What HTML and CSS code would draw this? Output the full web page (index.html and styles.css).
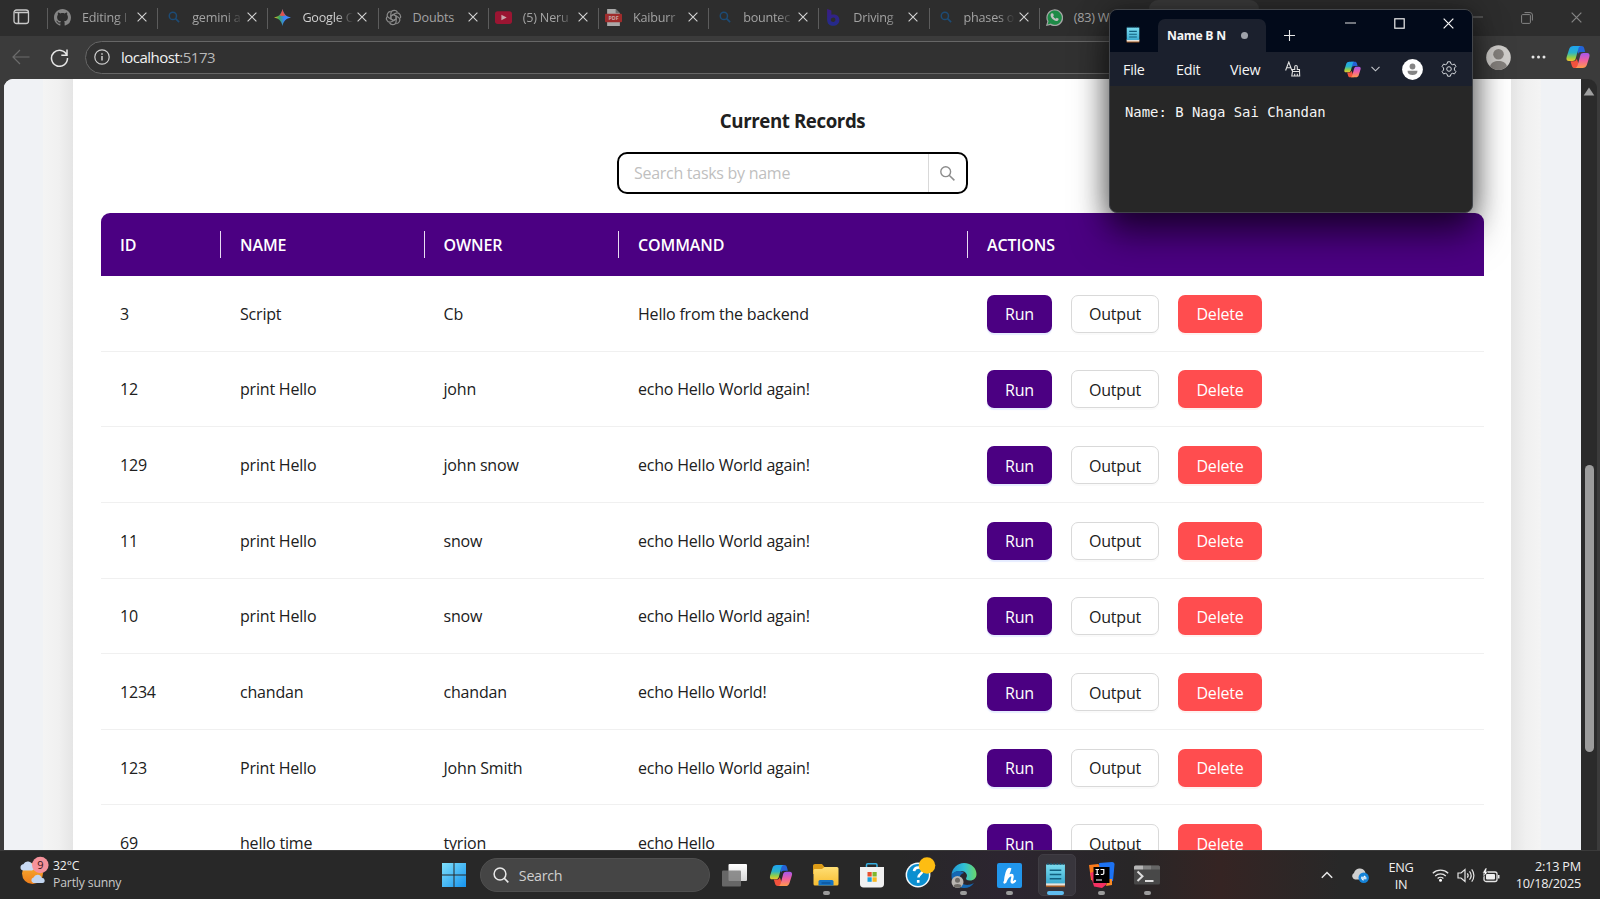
FILE: index.html
```html
<!DOCTYPE html>
<html lang="en">
<head>
<meta charset="utf-8">
<title>Current Records</title>
<link rel="stylesheet" href="styles.css">
</head>
<body>
<svg class="defs" width="0" height="0" aria-hidden="true">
  <defs>
    <linearGradient id="cpA" x1="0" y1="0" x2="0" y2="1"><stop offset="0" stop-color="#1fa2f0"/><stop offset=".45" stop-color="#2bb4c8"/><stop offset=".75" stop-color="#8fcf4a"/><stop offset="1" stop-color="#f2c52e"/></linearGradient>
    <linearGradient id="cpB" x1="0" y1="0" x2="0" y2="1"><stop offset="0" stop-color="#a457f0"/><stop offset=".5" stop-color="#f0609e"/><stop offset="1" stop-color="#ff9a4a"/></linearGradient>
    <linearGradient id="gem" x1="0" y1="0" x2="1" y2="0"><stop offset="0" stop-color="#f5c518"/><stop offset=".3" stop-color="#39a85a"/><stop offset=".6" stop-color="#3b82f6"/><stop offset="1" stop-color="#4c8df8"/></linearGradient>
    <linearGradient id="win" x1="0" y1="0" x2="1" y2="1"><stop offset="0" stop-color="#7fe0fb"/><stop offset="1" stop-color="#1593ee"/></linearGradient>
    <linearGradient id="fold" x1="0" y1="0" x2="0" y2="1"><stop offset="0" stop-color="#ffdf75"/><stop offset="1" stop-color="#f7bd31"/></linearGradient>
    <linearGradient id="edg" x1="0" y1="0" x2="1" y2="0"><stop offset="0" stop-color="#2295d6"/><stop offset=".5" stop-color="#2fc0d6"/><stop offset="1" stop-color="#6bd76a"/></linearGradient>
    <linearGradient id="pad" x1="0" y1="0" x2="0" y2="1"><stop offset="0" stop-color="#7adcf0"/><stop offset="1" stop-color="#3cabd0"/></linearGradient>
    <linearGradient id="sun" x1="0" y1="0" x2="0" y2="1"><stop offset="0" stop-color="#f9b233"/><stop offset="1" stop-color="#ee7d1a"/></linearGradient>
    <linearGradient id="bb" x1="0" y1="0" x2="0" y2="1"><stop offset="0" stop-color="#3c1c84"/><stop offset="1" stop-color="#222c8c"/></linearGradient>
    <linearGradient id="tv" x1="0" y1="0" x2="0" y2="1"><stop offset="0" stop-color="#ffffff"/><stop offset="1" stop-color="#d6d6d6"/></linearGradient>
    <symbol id="copilot" viewBox="0 0 24 24">
      <path fill="#2463d6" d="M10 1h5.500c1.500 0 2.300.9 2.700 2.300l1 3.700h-4.500c-1.400 0-2.200.8-2.600 2z"/>
      <path fill="url(#cpA)" d="M7.500 1h7.200c-1.400.4-2 1.400-2.400 2.900L9.700 13.500C9.200 15.300 8.200 16 6.500 16H3C.8 16 0 14.500.6 12.200L3.200 4C3.900 2 5.300 1 7.500 1z"/>
      <path fill="#f2523d" d="M14 23H8.800c-1.600 0-2.500-.8-3-2.300L4.500 16.300H7c2 0 3.200-.8 3.800-2.600z"/>
      <path fill="url(#cpB)" d="M16.500 23H9.300c1.400-.4 2-1.400 2.400-2.900l2.600-9.600c.5-1.800 1.500-2.500 3.200-2.500H21c2.200 0 3 1.500 2.400 3.800L20.800 20c-.7 2-2.100 3-4.300 3z"/>
    </symbol>
    <symbol id="x" viewBox="0 0 10 10"><path d="M.6.6l8.800 8.800M9.400.6L.6 9.400" fill="none" stroke="currentColor" stroke-width="1.100"/></symbol>
    <symbol id="mag" viewBox="0 0 16 16"><circle cx="6.500" cy="6.500" r="4.800" fill="none" stroke="#1d4b75" stroke-width="2"/><path d="M9.800 9.800l5 5" stroke="#1d4b75" stroke-width="2.300"/></symbol>
    <symbol id="notepad" viewBox="0 0 20 24">
      <path fill="#a45a23" d="M1 19h18v4.500H1z"/><path fill="#e9e4dc" d="M1 19h18v3H1z"/>
      <path fill="url(#pad)" d="M1 2h18v18H1z"/>
      <path stroke="#155a78" stroke-width="1.400" stroke-dasharray="1.500 1.500" d="M2 1.500h16" fill="none"/>
      <path stroke="#12607f" stroke-width="1.500" d="M4.500 7.500h11M4.500 11.500h11M4.500 15.500h11" fill="none"/>
    </symbol>
  </defs>
</svg>

<div class="screen">
  <header class="tabstrip">
    <div class="tab-actions"><svg width="17" height="16" viewBox="0 0 17 16"><rect x="1" y="1" width="14.500" height="13.500" rx="2.500" fill="none" stroke="#c9c9c9" stroke-width="1.300"/><path d="M1.500 3.500h13.500M5.500 3.500v11" stroke="#c9c9c9" stroke-width="1.500"/></svg></div>
    <div class="tab"><svg class="fav" viewBox="0 0 16 16"><path fill="#858585" d="M8 0C3.580 0 0 3.580 0 8c0 3.540 2.290 6.530 5.470 7.590.4.070.55-.17.55-.38 0-.19-.01-.82-.01-1.490-2.010.37-2.530-.49-2.690-.94-.09-.23-.48-.94-.82-1.130-.28-.15-.68-.52-.01-.53.63-.01 1.080.58 1.230.82.72 1.210 1.870.87 2.330.66.07-.52.28-.87.51-1.070-1.780-.2-3.640-.89-3.640-3.950 0-.87.31-1.590.82-2.150-.08-.2-.36-1.020.08-2.120 0 0 .67-.21 2.200.82.64-.18 1.320-.27 2-.27s1.360.09 2 .27c1.530-1.040 2.200-.82 2.200-.82.44 1.100.16 1.920.08 2.120.51.56.82 1.270.82 2.150 0 3.070-1.870 3.750-3.650 3.950.29.25.54.73.54 1.480 0 1.070-.01 1.930-.01 2.200 0 .21.15.46.55.38A8 8 0 0 0 16 8c0-4.420-3.580-8-8-8z"/></svg><span class="tab-title">Editing I</span><svg class="close"><use href="#x"/></svg></div>
    <div class="tab"><svg class="fav small"><use href="#mag"/></svg><span class="tab-title">gemini a</span><svg class="close"><use href="#x"/></svg></div>
    <div class="tab"><svg class="fav" viewBox="0 0 16 16"><path fill="url(#gem)" d="M8 0c.8 4.600 3.400 7.200 8 8-4.600.8-7.200 3.400-8 8-.8-4.600-3.400-7.200-8-8 4.600-.8 7.200-3.400 8-8z"/><path fill="#e0524a" d="M8 0c.5 2.800 1.500 4.700 3.100 6L8 6.500 4.900 6C6.500 4.700 7.500 2.800 8 0z"/></svg><span class="tab-title lit">Google C</span><svg class="close"><use href="#x"/></svg></div>
    <div class="tab"><svg class="fav" viewBox="0 0 16 16"><g fill="none" stroke="#8a8a8a" stroke-width="1.100"><path id="petal" d="M8 5.200l2.500 1.400v4.600c0 2-1.500 3.500-3.300 3.500-1.200 0-2.300-.6-2.900-1.600"/><use href="#petal" transform="rotate(60 8 8)"/><use href="#petal" transform="rotate(120 8 8)"/><use href="#petal" transform="rotate(180 8 8)"/><use href="#petal" transform="rotate(240 8 8)"/><use href="#petal" transform="rotate(300 8 8)"/></g></svg><span class="tab-title full">Doubts</span><svg class="close"><use href="#x"/></svg></div>
    <div class="tab"><svg class="fav" viewBox="0 0 16 16"><rect y="2" width="16" height="12" rx="2.500" fill="#9b1532"/><path d="M6 5.300l5 2.700-5 2.700z" fill="#c9a5ab"/></svg><span class="tab-title">(5) Neru</span><svg class="close"><use href="#x"/></svg></div>
    <div class="tab"><svg class="fav" viewBox="0 0 16 16"><path fill="#a9a9a9" d="M2 0h8l4 4v12H2z"/><path fill="#6b6b6b" d="M10 0v4h4z"/><rect y="4.500" width="16" height="8" rx="1" fill="#9f2c2c"/><text x="8" y="10.600" class="pdf" text-anchor="middle">PDF</text></svg><span class="tab-title">Kaiburr</span><svg class="close"><use href="#x"/></svg></div>
    <div class="tab"><svg class="fav small"><use href="#mag"/></svg><span class="tab-title">bountec</span><svg class="close"><use href="#x"/></svg></div>
    <div class="tab"><svg class="fav" viewBox="0 0 16 16"><path fill="url(#bb)" fill-rule="evenodd" d="M2 0l4 1.500v4C10 4 14 6.500 13.500 11c-.5 4-4.500 5.500-8 4.500C2.500 14.600 2 12 2 9zM8 8c-2 0-2.800 1.200-2.500 2.800.5 2 4 1.700 4.300-.3C10 9 9.300 8 8 8z"/></svg><span class="tab-title">Driving</span><svg class="close"><use href="#x"/></svg></div>
    <div class="tab"><svg class="fav small"><use href="#mag"/></svg><span class="tab-title">phases o</span><svg class="close"><use href="#x"/></svg></div>
    <div class="tab"><svg class="fav" viewBox="0 0 16 16"><path fill="#a5a5a5" d="M0 16l1.200-4.200A7.900 7.900 0 1 1 4.200 15z"/><path fill="#1e8a47" d="M1.500 14.500l.9-3A6.700 6.700 0 1 1 4.500 13.700z"/><path fill="#c0c0c0" d="M5.500 4l1.200.2.7 1.700-.7.900c.5 1 1.300 1.800 2.500 2.300l.9-.9 1.800.9c0 1.500-1 2.200-2.200 2.200C7 10.800 4.500 8.300 4.300 5.900 4.300 5 4.700 4.300 5.500 4z"/></svg><span class="tab-title full">(83) W</span></div>
    <div class="behind-tab"></div>
    <div class="win-controls">
      <svg width="10" height="10" viewBox="0 0 10 10"><path d="M0 5h10" stroke="#777"/></svg>
      <svg width="12" height="12" viewBox="0 0 12 12"><path d="M3.500.6H9a2.400 2.400 0 0 1 2.400 2.400v5.500" fill="none" stroke="#858585"/><rect x=".6" y="2.600" width="8.800" height="8.800" rx="1" fill="none" stroke="#858585"/></svg>
      <svg width="11" height="11"><use href="#x"/></svg>
    </div>
  </header>

  <nav class="toolbar">
    <svg class="back" width="18" height="16" viewBox="0 0 18 16"><path d="M8 1L1 8l7 7M1 8h16.500" fill="none" stroke="#6c6c6c" stroke-width="1.200"/></svg>
    <svg class="reload" width="19" height="19" viewBox="0 0 19 19"><path d="M16.900 7.200A8 8 0 1 0 17.500 10M17 1.500v5.700h-5.700" fill="none" stroke="#e6e6e6" stroke-width="1.500"/></svg>
    <div class="address">
      <svg width="16" height="16" viewBox="0 0 16 16"><circle cx="8" cy="8" r="7.200" fill="none" stroke="#cfcfcf" stroke-width="1.200"/><path d="M8 7v4.500M8 4.300v1.500" stroke="#cfcfcf" stroke-width="1.500"/></svg>
      <span><b class="host">localhost</b><span class="port">:5173</span></span>
    </div>
    <div class="tools">
      <svg width="25" height="25" viewBox="0 0 25 25"><circle cx="12.500" cy="12.500" r="12.300" fill="#cfcdca"/><circle cx="12.500" cy="9.300" r="5.300" fill="#85817d"/><path d="M4 21.500c1-4 4.300-5.500 8.500-5.500s7.500 1.500 8.500 5.500a12.300 12.300 0 0 1-17 0z" fill="#85817d"/></svg>
      <svg width="15" height="4" viewBox="0 0 15 4"><g fill="#e6e6e6"><circle cx="2" cy="2" r="1.500"/><circle cx="7.500" cy="2" r="1.500"/><circle cx="13" cy="2" r="1.500"/></g></svg>
      <svg width="24" height="24"><use href="#copilot"/></svg>
    </div>
  </nav>

  <div class="viewport">
    <div class="page">
      <div class="edge left"></div>
      <main class="card">
        <h1>Current Records</h1>
        <div class="search"><span class="placeholder">Search tasks by name</span><span class="search-btn"><svg width="15" height="15" viewBox="0 0 15 15"><circle cx="5.700" cy="5.700" r="4.900" fill="none" stroke="#8c8c8c" stroke-width="1.400"/><path d="M9.200 9.200l5.200 5.200" stroke="#8c8c8c" stroke-width="1.500"/></svg></span></div>
        <div class="table">
          <div class="row head"><span>ID</span><span>NAME</span><span>OWNER</span><span>COMMAND</span><span>ACTIONS</span></div>
          <div class="row"><span>3</span><span>Script</span><span>Cb</span><span>Hello from the backend</span><div class="actions"><button class="run">Run</button><button class="out">Output</button><button class="del">Delete</button></div></div>
          <div class="row"><span>12</span><span>print Hello</span><span>john</span><span>echo Hello World again!</span><div class="actions"><button class="run">Run</button><button class="out">Output</button><button class="del">Delete</button></div></div>
          <div class="row"><span>129</span><span>print Hello</span><span>john snow</span><span>echo Hello World again!</span><div class="actions"><button class="run">Run</button><button class="out">Output</button><button class="del">Delete</button></div></div>
          <div class="row"><span>11</span><span>print Hello</span><span>snow</span><span>echo Hello World again!</span><div class="actions"><button class="run">Run</button><button class="out">Output</button><button class="del">Delete</button></div></div>
          <div class="row"><span>10</span><span>print Hello</span><span>snow</span><span>echo Hello World again!</span><div class="actions"><button class="run">Run</button><button class="out">Output</button><button class="del">Delete</button></div></div>
          <div class="row"><span>1234</span><span>chandan</span><span>chandan</span><span>echo Hello World!</span><div class="actions"><button class="run">Run</button><button class="out">Output</button><button class="del">Delete</button></div></div>
          <div class="row"><span>123</span><span>Print Hello</span><span>John Smith</span><span>echo Hello World again!</span><div class="actions"><button class="run">Run</button><button class="out">Output</button><button class="del">Delete</button></div></div>
          <div class="row"><span>69</span><span>hello time</span><span>tyrion</span><span>echo Hello</span><div class="actions"><button class="run">Run</button><button class="out">Output</button><button class="del">Delete</button></div></div>
        </div>
      </main>
      <div class="edge right"></div>
    </div>
    <div class="scrollbar"><svg width="12" height="9" viewBox="0 0 12 9"><path d="M6 .5L11.300 8.500H.7z" fill="#a0a0a0"/></svg><div class="thumb"></div></div>
  </div>

  <footer class="taskbar">
    <div class="weather">
      <svg width="29" height="31" viewBox="0 0 29 31"><circle cx="12.500" cy="17.500" r="10.500" fill="url(#sun)"/><path fill="#c9daf3" d="M3 14.500a3.200 3.200 0 0 1 .3-6.300 5 5 0 0 1 9.300 1.300 2.600 2.600 0 0 1-.6 5z"/><path fill="#c2d5f0" d="M13.500 27a2.900 2.900 0 0 1 0-5.600 4.400 4.400 0 0 1 8.300.6 2.500 2.500 0 0 1 .7 5z"/><circle cx="20.300" cy="9" r="8.300" fill="#f5929b"/><text x="20.300" y="13" class="badge" text-anchor="middle">9</text></svg>
      <div class="wtext"><div class="temp">32°C</div><div class="cond">Partly sunny</div></div>
    </div>
    <div class="dock">
      <div class="app"><svg width="24" height="24" viewBox="0 0 24 24"><path fill="url(#win)" d="M0 0h11.500v11.500H0zM12.500 0H24v11.500H12.500zM0 12.500h11.500V24H0zM12.500 12.500H24V24H12.500z"/></svg></div>
      <div class="tsearch"><svg width="16" height="16" viewBox="0 0 16 16"><circle cx="7" cy="7" r="5.900" fill="none" stroke="#e8e8e8" stroke-width="1.500"/><path d="M11 11l4.300 4.300" stroke="#e8e8e8" stroke-width="1.700"/></svg>Search</div>
      <div class="app"><svg width="25" height="23" viewBox="0 0 25 23"><rect x="6.500" width="18.500" height="17" rx="1" fill="url(#tv)"/><rect y="6.500" width="19" height="16" rx="1" fill="#777" opacity=".8"/></svg></div>
      <div class="app"><svg width="24" height="23"><use href="#copilot"/></svg></div>
      <div class="app running"><svg width="26" height="24" viewBox="0 0 26 24"><path fill="#dc9b16" d="M0 3c0-1.200.8-2 2-2h7l2.500 3H24v7H0z"/><path fill="url(#fold)" d="M1.500 6H9l2.500-2H24a1.500 1.500 0 0 1 1.500 1.500V21A1.500 1.500 0 0 1 24 22.500H2A1.500 1.500 0 0 1 .5 21V7z"/><path fill="#1573c4" d="M5.500 22.500v-4a1.500 1.500 0 0 1 1.500-1.500h12a1.500 1.500 0 0 1 1.500 1.500v4z"/><path stroke="#0d5297" stroke-width="1.300" d="M8.500 20h9"/></svg></div>
      <div class="app"><svg width="26" height="25" viewBox="0 0 26 25"><path d="M7.500 4V2c0-.8.400-1.200 1.200-1.200h8.100c.8 0 1.200.4 1.200 1.200v2" fill="none" stroke="#35aee0" stroke-width="1.500"/><path fill="#f1f1f1" d="M1 4h24v17c0 2.300-1.200 3.500-3.500 3.500h-17C2.200 24.500 1 23.300 1 21z"/><path fill="#e8502f" d="M8.500 9h4.200v4.500H8.500z"/><path fill="#7eb72d" d="M13.500 9h4.200v4.500h-4.200z"/><path fill="#199fdc" d="M8.500 14.300h4.200v4.500H8.500z"/><path fill="#f8b81e" d="M13.500 14.300h4.200v4.500h-4.200z"/></svg></div>
      <div class="app help"><svg width="31" height="31" viewBox="0 0 31 31"><circle cx="13" cy="18" r="12.400" fill="#f4f9fc"/><circle cx="13" cy="18" r="10.900" fill="#0b8fd0"/><path d="M9 14.200c.3-2.600 2-3.700 4.200-3.700 2.500 0 4.200 1.400 4.200 3.500 0 3-4 3-4 6.500M13.200 23v2.700" fill="none" stroke="#fff" stroke-width="2.600"/><circle cx="22" cy="8.500" r="8.300" fill="#fdbd12"/></svg></div>
      <div class="app running"><svg width="26" height="25" viewBox="0 0 26 25"><path fill="url(#edg)" d="M.5 12C1 5 6.500 0 13 0c7.500 0 12.500 5.500 12.500 11 0 4-2.700 6.500-6.500 6.500-3.300 0-4.500-1.300-3.700-2.700C17.500 11.500 14 8 10.500 8 6 8 2 9.500.5 12z"/><path fill="#1467b3" d="M.5 12C3 7.500 10 7 13 10c-3 .5-4.500 3-4.300 5.500C9 20 13 22.500 18 21.800c2-.3 3.800-1.200 5-1.800C21 23 17.500 25 13 25 5.500 25 0 19 .5 12z"/><circle cx="6.500" cy="19" r="6" fill="#b9b5b1"/><circle cx="6.500" cy="17.300" r="2.500" fill="#6e6a66"/><path fill="#6e6a66" d="M2.500 23.300c.3-3 7.700-3 8 0a6 6 0 0 1-8 0z"/></svg></div>
      <div class="app running"><svg width="25" height="25" viewBox="0 0 25 25"><rect width="25" height="25" rx="2" fill="#2196ec"/><path d="M7.500 19.500c2-4.500 4.500-9 5.500-13.500-2.500-1-4.500 6-5 13.500 1.500-4 4-7.500 6.500-7.500 3 0-1.500 7.500 1 7.500.9 0 1.800-.6 2.500-1.600" fill="none" stroke="#fff" stroke-width="2.400" stroke-linecap="round"/></svg></div>
      <div class="app active"><svg width="21" height="26"><use href="#notepad"/></svg></div>
      <div class="app running"><svg width="26" height="26" viewBox="0 0 26 26"><path fill="#f97a1c" d="M0 3l9-1 9 6-7 12-9-2z"/><path fill="#1d72f2" d="M10 1l13-1c1.700 0 2.500 1 2.500 2.500L24 19l-12 3z"/><path fill="#f43062" d="M1 11l6-2 11 13-5 4-8-1.500z"/><path fill="#f98a25" d="M19 17h4v6l-6 1z"/><path d="M4.500 5h16v16h-16z"/><path d="M6.500 7.500h3.500M8.200 7.500v5M6.500 12.500h3.500M11.500 7.500h3.300v3.700c0 1-1 1.500-3 1.200M7 18h6" fill="none" stroke="#fff" stroke-width="1.200"/></svg></div>
      <div class="app running"><svg width="26" height="20" viewBox="0 0 26 20"><rect y=".5" width="26" height="19" rx="1.500" fill="#484848"/><path fill="#b6b6b6" d="M0 4.500V2Q0 .5 1.500.5H9v4z"/><path fill="#818181" d="M9 .5h8v4H9z"/><path fill="#666" d="M17 .5h7.500Q26 .5 26 2v2.500h-9z"/><path d="M3.500 6.500l5 4.700-5 4.800M11 16h8.500" fill="none" stroke="#ddd" stroke-width="2"/></svg></div>
    </div>
    <div class="tray">
      <svg width="12" height="8" viewBox="0 0 12 8"><path d="M.8 6.800L6 1.500l5.200 5.300" fill="none" stroke="#e8e8e8" stroke-width="1.500"/></svg>
      <svg class="cloud" width="17" height="15" viewBox="0 0 17 15"><path fill="#cfcfcf" d="M3 11.500A3.500 3.500 0 0 1 2 5 6 6 0 0 1 13 3.500l2 8z"/><circle cx="11.700" cy="9.700" r="5.200" fill="#1583d8"/><path d="M9 9.300h4.500l-1.500-1.500M14.500 10.800H10l1.500 1.500" fill="none" stroke="#fff" stroke-width="1.100"/></svg>
      <div class="lang">ENG<br>IN</div>
      <svg class="wifi" width="17" height="14" viewBox="0 0 17 14"><g fill="none" stroke="#e5e5e5" stroke-width="1.300"><path d="M.8 5.300a11 11 0 0 1 15.400 0M3.200 8a7.600 7.600 0 0 1 10.600 0M5.600 10.500a4.200 4.200 0 0 1 5.800 0"/></g><circle cx="8.500" cy="12.200" r="1.500" fill="#fff"/></svg>
      <svg class="vol" width="18" height="15" viewBox="0 0 18 15"><path d="M1 5h3l4-3.500v12L4 10H1zM10.300 5.300c1 1.300 1 3.100 0 4.400M12.500 3.300c2 2.500 2 5.900 0 8.400M14.700 1.300c2.900 3.600 2.900 8.800 0 12.400" fill="none" stroke="#e5e5e5" stroke-width="1.200"/></svg>
      <svg class="bat" width="18" height="15" viewBox="0 0 18 15"><rect x="2" y="4" width="13" height="9.500" rx="2" fill="none" stroke="#e5e5e5" stroke-width="1.300"/><rect x="4" y="6" width="9" height="5.500" rx="1" fill="#eee"/><path d="M16.700 7v3.500" stroke="#e5e5e5" stroke-width="1.600"/><path d="M3.500 0L.5 5h2L1.500 8.500 6 4H4L5 0z" fill="#fff" stroke="#282828" stroke-width=".5"/></svg>
      <div class="clock">2:13 PM<br>10/18/2025</div>
    </div>
  </footer>

  <section class="notepad">
    <div class="np-title">
      <svg class="np-logo" width="14" height="17"><use href="#notepad"/></svg>
      <div class="np-tab"><span>Name B N</span><i></i></div>
      <svg class="np-plus" width="11" height="11" viewBox="0 0 11 11"><path d="M5.500 0v11M0 5.500h11" stroke="#e8e8e8" stroke-width="1.100"/></svg>
      <div class="np-ctl">
        <svg width="11" height="11" viewBox="0 0 11 11"><path d="M0 5h11" stroke="#e0e0e0" stroke-width="1.100"/></svg>
        <svg width="11" height="11" viewBox="0 0 11 11"><rect x=".8" y=".8" width="9.400" height="9.400" fill="none" stroke="#f0f0f0" stroke-width="1.200"/></svg>
        <svg width="11" height="11"><use href="#x"/></svg>
      </div>
    </div>
    <div class="np-menu">
      <span class="m-file">File</span><span class="m-edit">Edit</span><span class="m-view">View</span>
      <svg class="m-fmt" width="16" height="16" viewBox="0 0 16 16"><path d="M.6 9.500L3.800 1l3.100 8.500M1.700 6.800h4.100M7.500 10.500V8.500h2.200V5.800a1.300 1.300 0 0 1 2.600 0v2.700h2.200v2zM7.500 10.500L6.800 15h7.900l-.2-4.500M9.700 15v-2.200M12.300 15v-2.200" fill="none" stroke="#e0e0e0" stroke-width="1.100"/></svg>
      <svg class="m-cop" width="17" height="17"><use href="#copilot"/></svg>
      <svg class="m-chev" width="9" height="6" viewBox="0 0 9 6"><path d="M.5 .8l4 4 4-4" fill="none" stroke="#c5c8cc" stroke-width="1.100"/></svg>
      <svg class="m-user" width="21" height="21" viewBox="0 0 21 21"><circle cx="10.500" cy="10.500" r="10.400" fill="#fff"/><circle cx="10.500" cy="7.500" r="2.900" fill="#858585"/><path fill="#858585" d="M5.500 11.700h10c0 3-2 4.300-5 4.300s-5-1.300-5-4.300z"/></svg>
      <svg class="m-gear" width="16" height="16" viewBox="0 0 16 16"><path d="M6.600.8h2.800l.5 2 1.600.9 2-.6 1.400 2.400L13.400 7v2l1.500 1.500-1.400 2.400-2-.6-1.600.9-.5 2H6.600l-.5-2-1.600-.9-2 .6-1.400-2.400L2.600 9V7L1.100 5.500l1.400-2.400 2 .6 1.600-.9z" fill="none" stroke="#d5d8dc" stroke-linejoin="round"/><circle cx="8" cy="8" r="2.300" fill="none" stroke="#d5d8dc"/></svg>
    </div>
    <div class="np-body">Name: B Naga Sai Chandan</div>
  </section>
</div>
</body>
</html>
```

FILE: styles.css
```css
* { box-sizing: border-box; }
body { margin: 0; font-family: "Open Sans", "Noto Sans", sans-serif; }
svg { display: block; flex: none; }
.defs { position: absolute; }
.screen { position: relative; width: 1600px; height: 899px; overflow: hidden; display: flex; flex-direction: column; background: #3b3b3b; }

/* Browser tab strip */
.tabstrip { height: 36px; flex: none; display: flex; background: #2d2d2d; color: #a3a3a3; font-size: 12.600px; }
.tab-actions { width: 47px; padding: 9px 0 0 13px; flex: none; }
.tab { width: 110.200px; flex: none; height: 36px; display: flex; align-items: center; padding-left: 7px; position: relative; padding-bottom: 2px; }
.tab::before { content: ""; position: absolute; left: 0; top: 8px; width: 1px; height: 21px; background: #5c5c5c; }
.fav { width: 17px; height: 17px; margin-right: 11px; }
.fav.small { width: 12px; height: 12px; margin: 0 12px 0 4px; }
.tab-title { width: 53px; white-space: nowrap; letter-spacing: -.2px; -webkit-mask-image: linear-gradient(90deg, #000 34px, transparent 51px); mask-image: linear-gradient(90deg, #000 34px, transparent 51px); }
.tab-title.full { -webkit-mask-image: none; mask-image: none; }
.tab-title.lit { color: #cfcfcf; }
.close { width: 10px; height: 10px; color: #d4d4d4; margin-left: 2px; }
.pdf { font: bold 5px "Open Sans", sans-serif; fill: #c9a9a9; }
.behind-tab { width: 110px; height: 36px; flex: none; background: #3b3b3b; border-radius: 9px 9px 0 0; }
.win-controls { margin-left: auto; padding: 12px 18px 0 0; display: flex; gap: 38px; color: #858585; }

/* Browser toolbar */
.toolbar { height: 42.500px; flex: none; display: flex; align-items: center; padding-left: 12px; background: #3b3b3b; }
.reload { margin-left: 20px; }
.address { margin-left: 16px; width: 1250px; height: 33px; border: 1px solid #676767; border-radius: 17px; background: #313131; display: flex; align-items: center; padding-left: 8px; gap: 11px; font-size: 15px; line-height: 18px; letter-spacing: -.5px; color: #b8b8b8; }
.address span { padding-bottom: 1px; }
.host { font-weight: 400; color: #f2f2f2; }
.tools { margin-left: auto; display: flex; align-items: center; gap: 20px; padding-right: 10px; }

/* Web page */
.viewport { height: 771.500px; flex: none; display: flex; padding: 0 3px 0 4px; }
.page { width: 1577px; display: flex; background: #f0f2f5; border-radius: 9px 0 0 0; overflow: hidden; }
.edge { flex: none; }
.edge.left { width: 69px; background: linear-gradient(90deg, #f0f2f5 39px, #f4f4f4 39px, #f0f0f0 55px, #e5e5e5); }
.edge.right { width: 70px; background: linear-gradient(270deg, #f0f2f5 40px, #f4f4f4 40px, #f0f0f0 55px, #e5e5e5); }
.card { width: 1438px; height: 771.500px; flex: none; background: #fff; padding: 27px 27px 0 28px; color: #202020; font-size: 16px; overflow: hidden; }
h1 { margin: 0; font-size: 18.700px; line-height: 30px; font-weight: 700; text-align: center; letter-spacing: -.42px; }
.search { width: 351px; height: 42px; margin: 16.500px auto 0; border: 2px solid #000; border-radius: 10px; display: flex; color: #bfbfbf; font-size: 16px; letter-spacing: -.28px; }
.placeholder { width: 310px; padding-left: 15px; line-height: 38px; border-right: 1px solid #d9d9d9; }
.search-btn { flex: 1; display: flex; align-items: center; justify-content: center; }
.table { margin-top: 18.500px; }
.row { display: grid; grid-template-columns: 120px 203.500px 194.500px 349px 1fr; height: 75.650px; align-items: center; border-bottom: 1px solid #f0f0f0; letter-spacing: -.2px; }
.row > * { padding-left: 19px; white-space: nowrap; }
.row > span { padding-top: 1px; }
.head { height: 63.500px; background: #4b0082; border: 0; color: #fff; border-radius: 9px 9px 0 0; font-weight: 600; letter-spacing: -.1px; }
.head > span { line-height: 26px; border-right: 1.500px solid #e8dcf2; }
.head > span:last-child { border: 0; }
.actions { display: flex; gap: 19px; padding-top: 1px; }
button { height: 38px; border-radius: 7px; border: 0; font: inherit; letter-spacing: -.2px; padding: 1px 0 0; color: #fff; }
.run { width: 65px; background: #4b0082; box-shadow: 0 2px 1px rgba(5,70,255,.1); }
.out { width: 88px; background: #fff; border: 1px solid #d9d9d9; color: #202020; box-shadow: 0 2px 0 rgba(0,0,0,.02); }
.del { width: 84px; background: #ff4d4f; box-shadow: 0 2px 0 rgba(255,38,5,.06); }
.scrollbar { width: 16px; background: #2b2b2b; border-radius: 0 9px 0 0; padding: 8px 0 0 1.500px; }
.thumb { margin: 369px 0 0 2px; width: 9px; height: 287px; border-radius: 5px; background: #9c9c9c; }

/* Taskbar */
.taskbar { height: 49px; flex: none; display: flex; background: linear-gradient(90deg, #282828 0 900px, #2c2530 1000px, #282627 1130px, #352423 1220px, #282828 1340px); border-top: 1px solid #3a3a3a; color: #f0f0f0; }
.weather { width: 431px; flex: none; display: flex; padding: 5px 0 0 20px; gap: 4px; font-size: 12.200px; line-height: 17px; letter-spacing: -.15px; }
.wtext { padding-top: 1px; }
.cond { color: #c8c8c8; }
.badge { font: 11px "Open Sans", sans-serif; fill: #3a1518; }
.dock { display: flex; align-items: center; }
.app { width: 45.850px; height: 48px; display: flex; align-items: center; justify-content: center; position: relative; }
.help { padding-left: 5px; }
.help svg { margin-top: -5px; }
.running::after, .active::after { content: ""; position: absolute; bottom: 4px; width: 7px; height: 4px; border-radius: 2px; background: #9c9c9c; }
.active::before { content: ""; position: absolute; inset: 3px 3px 3px 5px; border-radius: 5px; background: #38353c; border: 1px solid #403d44; }
.active svg { position: relative; }
.active::after { width: 17px; background: #60bdf0; }
.tsearch { width: 230px; height: 34px; margin: 0 2px 0 3px; border-radius: 17px; background: #454545; border: 1px solid #505050; display: flex; align-items: center; padding-left: 12px; gap: 10px; font-size: 14.300px; letter-spacing: -.3px; color: #cfcfcf; }
.tray { margin-left: auto; padding-right: 19px; display: flex; align-items: center; font-size: 12.700px; line-height: 17px; letter-spacing: -.2px; }
.cloud { margin-left: 19px; }
.lang { width: 30px; margin-left: 17px; text-align: center; padding-top: 1px; }
.wifi { margin-left: 16px; }
.vol { margin-left: 8px; }
.bat { margin-left: 7px; }
.clock { width: 72px; margin-left: 9px; text-align: right; white-space: nowrap; }

/* Notepad window floating over the desktop */
.notepad { position: absolute; left: 1109px; top: 9px; width: 364px; height: 204px; border-radius: 8px; border: 1px solid #43464b; background: #272727; overflow: hidden; box-shadow: 0 22px 36px rgba(0,0,0,.5), 0 2px 28px rgba(0,0,0,.42); color: #f5f5f5; }
.np-title { height: 42px; background: #020a1a; display: flex; }
.np-logo { margin: 16px 0 0 16px; }
.np-tab { width: 108px; height: 33px; margin: 9px 0 0 18px; background: #1b202d; border-radius: 7px 7px 0 0; display: flex; align-items: center; padding: 0 18px 1px 9px; justify-content: space-between; font-size: 12.200px; font-weight: 700; letter-spacing: -.25px; }
.np-tab i { width: 7px; height: 7px; border-radius: 50%; background: #9fa2aa; }
.np-plus { margin: 20px 0 0 18px; }
.np-ctl { margin-left: auto; padding: 8px 18px 0 0; display: flex; gap: 38px; }
.np-menu { height: 34px; background: #1b202d; display: flex; align-items: center; font-size: 14.300px; letter-spacing: -.25px; padding-left: 13px; }
.m-file { width: 53px; }
.m-edit { width: 54px; }
.m-view { width: 55px; }
.m-cop { margin-left: 43px; }
.m-chev { margin-left: 10px; }
.m-user { margin-left: 22px; }
.m-gear { margin-left: 18px; }
.np-body { padding: 16px 0 0 15px; font: 13.900px/20px "DejaVu Sans Mono", monospace; white-space: nowrap; }
```
